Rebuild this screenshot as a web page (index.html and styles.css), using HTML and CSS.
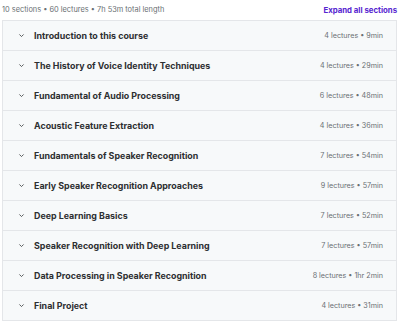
FILE: index.html
```html
<!DOCTYPE html>
<html lang="en">
<head>
    <meta charset="UTF-8">
    <meta name="viewport" content="width=device-width, initial-scale=1.0">
    <title>Course content</title>
    <link rel="stylesheet" href="styles.css">
</head>
<body>
    <div class="curriculum">
        <div class="summary">
            <span class="summary-text">10 sections &bull; 60 lectures &bull; 7h 53m total length</span>
            <button class="expand-all">Expand all sections</button>
        </div>

        <div class="sections">
            <div class="section">
                <svg class="chevron" viewBox="0 0 10 10"><path d="M2 3.5 L5 6.5 L8 3.5"/></svg>
                <span class="section-title">Introduction to this course</span>
                <span class="section-meta">4 lectures &bull; 9min</span>
            </div>
            <div class="section">
                <svg class="chevron" viewBox="0 0 10 10"><path d="M2 3.5 L5 6.5 L8 3.5"/></svg>
                <span class="section-title">The History of Voice Identity Techniques</span>
                <span class="section-meta">4 lectures &bull; 29min</span>
            </div>
            <div class="section">
                <svg class="chevron" viewBox="0 0 10 10"><path d="M2 3.5 L5 6.5 L8 3.5"/></svg>
                <span class="section-title">Fundamental of Audio Processing</span>
                <span class="section-meta">6 lectures &bull; 48min</span>
            </div>
            <div class="section">
                <svg class="chevron" viewBox="0 0 10 10"><path d="M2 3.5 L5 6.5 L8 3.5"/></svg>
                <span class="section-title">Acoustic Feature Extraction</span>
                <span class="section-meta">4 lectures &bull; 36min</span>
            </div>
            <div class="section">
                <svg class="chevron" viewBox="0 0 10 10"><path d="M2 3.5 L5 6.5 L8 3.5"/></svg>
                <span class="section-title">Fundamentals of Speaker Recognition</span>
                <span class="section-meta">7 lectures &bull; 54min</span>
            </div>
            <div class="section">
                <svg class="chevron" viewBox="0 0 10 10"><path d="M2 3.5 L5 6.5 L8 3.5"/></svg>
                <span class="section-title">Early Speaker Recognition Approaches</span>
                <span class="section-meta">9 lectures &bull; 57min</span>
            </div>
            <div class="section">
                <svg class="chevron" viewBox="0 0 10 10"><path d="M2 3.5 L5 6.5 L8 3.5"/></svg>
                <span class="section-title">Deep Learning Basics</span>
                <span class="section-meta">7 lectures &bull; 52min</span>
            </div>
            <div class="section">
                <svg class="chevron" viewBox="0 0 10 10"><path d="M2 3.5 L5 6.5 L8 3.5"/></svg>
                <span class="section-title">Speaker Recognition with Deep Learning</span>
                <span class="section-meta">7 lectures &bull; 57min</span>
            </div>
            <div class="section">
                <svg class="chevron" viewBox="0 0 10 10"><path d="M2 3.5 L5 6.5 L8 3.5"/></svg>
                <span class="section-title">Data Processing in Speaker Recognition</span>
                <span class="section-meta">8 lectures &bull; 1hr 2min</span>
            </div>
            <div class="section">
                <svg class="chevron" viewBox="0 0 10 10"><path d="M2 3.5 L5 6.5 L8 3.5"/></svg>
                <span class="section-title">Final Project</span>
                <span class="section-meta">4 lectures &bull; 31min</span>
            </div>
        </div>
    </div>
</body>
</html>
```

FILE: styles.css
```css
body {
    font-family: Inter, 'Noto Sans', sans-serif;
    margin: 0;
    padding: 0;
    background-color: #fff;
    color: #2d2f31;
}

.curriculum {
    padding: 0 3px 0 2px;
}

.summary {
    display: flex;
    justify-content: space-between;
    align-items: center;
    height: 19px;
    padding-bottom: 1px;
}

.summary-text {
    font-size: 7.4px;
    color: #6a6f73;
}

.expand-all {
    background: none;
    border: none;
    padding: 0;
    font-family: inherit;
    font-size: 7.8px;
    font-weight: 700;
    color: #5624d0;
    cursor: pointer;
}

.sections {
    border: 1px solid #e4e6e9;
}

.section {
    display: flex;
    align-items: center;
    height: 29px;
    padding: 0 13px 0 15px;
    background-color: #f7f9fa;
    border-bottom: 1px solid #e4e6e9;
}

.section:last-child {
    border-bottom: none;
}

.chevron {
    width: 7px;
    height: 7px;
    margin-right: 9px;
    fill: none;
    stroke: #3e4143;
    stroke-width: 1.2;
}

.section-title {
    flex: 1;
    font-size: 8.9px;
    font-weight: 700;
}

.section-meta {
    font-size: 7.2px;
    color: #6a6f73;
}
```
